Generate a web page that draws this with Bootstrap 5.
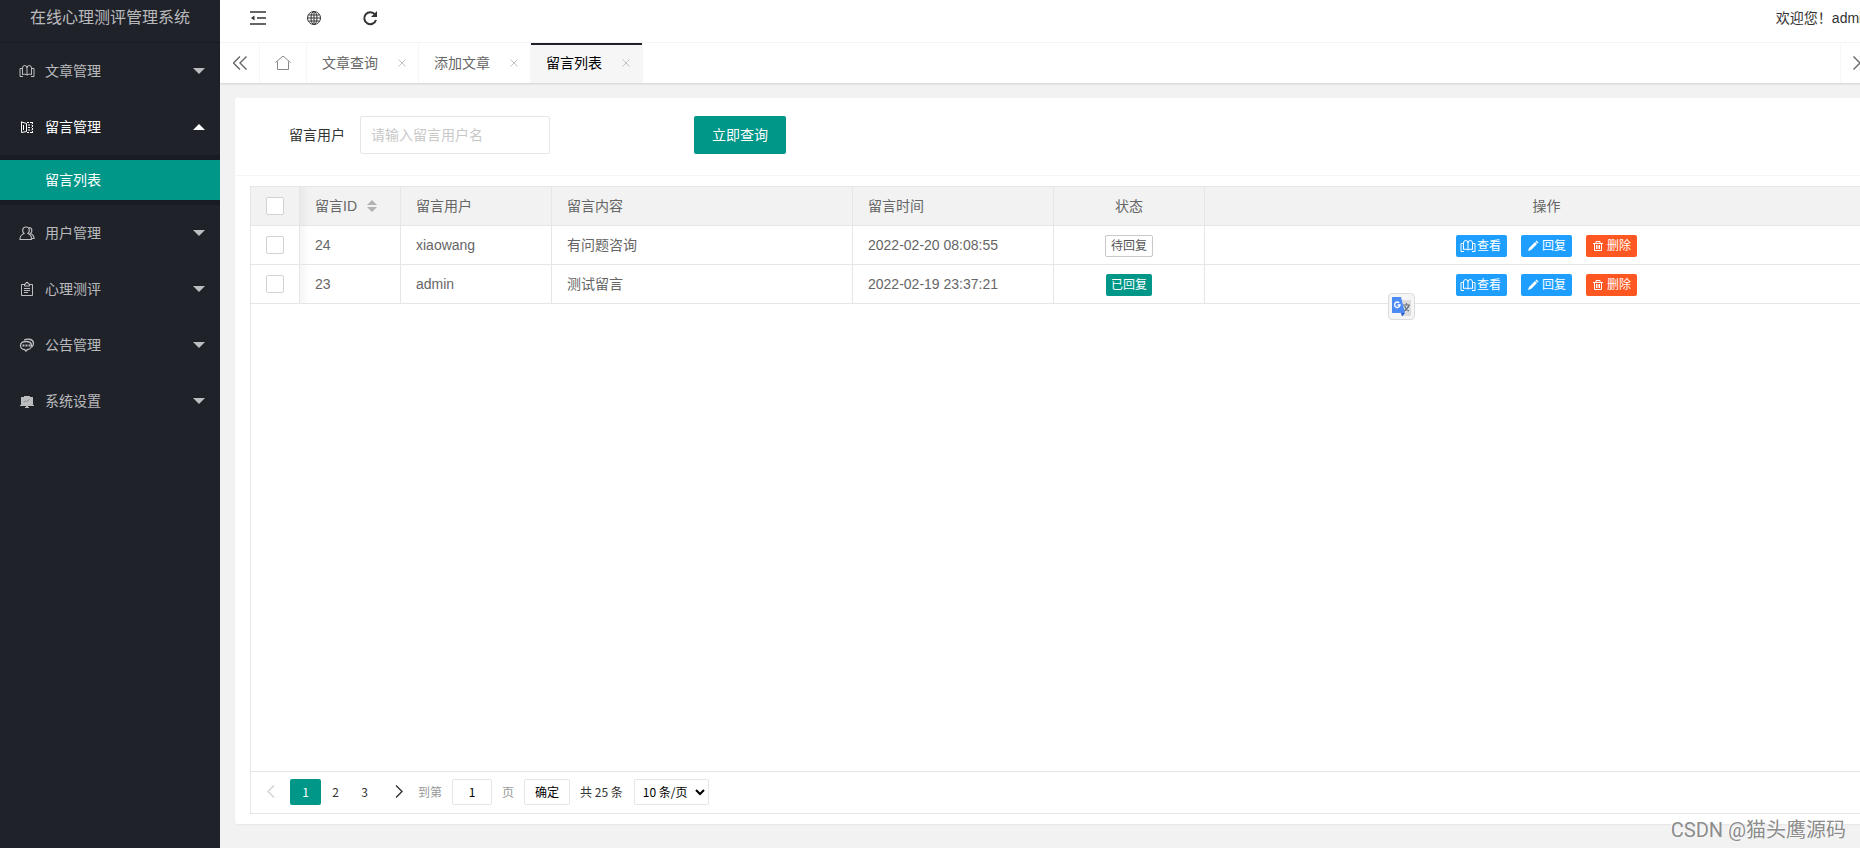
<!DOCTYPE html>
<html lang="zh-CN">
<head>
<meta charset="utf-8">
<meta name="viewport" content="width=device-width, initial-scale=1">
<title>在线心理测评管理系统</title>
<link href="https://cdn.jsdelivr.net/npm/bootstrap@5.3.0/dist/css/bootstrap.min.css" rel="stylesheet">
<script src="https://cdn.jsdelivr.net/npm/bootstrap@5.3.0/dist/js/bootstrap.bundle.min.js" defer></script>
<style>
:root{--teal:#009688;--line:#e6e6e6;--soft:#f6f6f6;--cjk:"Noto Sans CJK SC"}
body{font-family:"Liberation Sans",var(--cjk),sans-serif;font-size:14px;line-height:24px;color:#333;background:#f2f2f2}
svg{display:block;fill:none;stroke:currentColor}
a{text-decoration:none;color:inherit}
.shell{min-height:100vh;overflow:hidden}
.side{width:220px;background:#20222a;color:rgba(255,255,255,.7)}
.brand{height:43px;padding-bottom:6px;font-size:16px;border-bottom:1px solid #1b1d24}
.side-item{height:56px;padding:0 15px 0 19px}
.side-item svg{width:16px;height:16px}
.side-item .label{margin-left:10px}
.caret{margin-left:auto;border:6px solid transparent;border-top-color:currentColor;border-bottom:0}
.caret.up{border-top:0;border-bottom:6px solid currentColor}
.open{color:#fff}
.sub{background:#191b22;padding:5px 0}
.sub a{height:40px;padding-left:45px;background:var(--teal);color:#fff}
/* the workspace runs wider than the window */
.main{margin-right:-60px;min-width:0}
.topbar{height:43px;padding:0 50px 6px 10px;background:#fff;border-bottom:1px solid var(--soft)}
.topbar a.tool{width:56px}
.topbar svg{width:16px;height:16px;margin:auto}
.tabs{height:40px;background:#fff;box-shadow:0 1px 2px rgba(0,0,0,.14);position:relative}
.tabs>a{border-right:1px solid var(--soft);color:#666}
.ctl{width:40px}
.home{width:47px}
.home svg{color:#888}
.tab{width:112px;padding:0 12px 0 15px}
.tab svg{width:8px;height:8px;color:#c2c2c2}
.tabs>a.current{background:var(--soft);color:#000;box-shadow:inset 0 2px #20222a}
.tabs>a.edge{border-left:1px solid var(--soft)}
.panel{margin:15px 15px 24px;background:#fff;border-radius:2px;box-shadow:0 1px 2px rgba(0,0,0,.05)}
.search{height:78px;padding:18px 0 21px 54px;border-bottom:1px solid var(--soft)}
.search input{width:190px;height:38px;margin-left:15px;border:1px solid var(--line);border-radius:2px;padding:0 10px;outline:0}
.search input::placeholder{color:#c8c8c8;opacity:1}
.search button{height:38px;width:92px;margin-left:144px;background:var(--teal);color:#fff;border-radius:2px;font-size:14px;padding:0}
.search button:hover{background:#33ab9f;color:#fff}
.grid-box{margin:10px 15px;border:1px solid var(--line)}
.data{table-layout:fixed;border-collapse:separate;border-spacing:0;width:100%;color:#666;margin:0}
.data th,.data td{height:39px;padding:0 15px;border:solid var(--line);border-width:0 1px 1px 0;font-weight:400;vertical-align:middle}
.data th{background:#f2f2f2}
.data tr>:nth-child(2){background-image:linear-gradient(to right,rgba(0,0,0,.04),transparent 9px)}
.data input{appearance:none;display:block;width:18px;height:18px;border:1px solid #d2d2d2;border-radius:2px;background:#fff;margin:0}
.sort{width:10px;height:12px;fill:#b2b2b2;stroke:none;margin-left:10px}
.acts{gap:14px;padding-top:2px}
.mini{height:22px;padding:0 5px;font-size:12px;line-height:20px;border:0;border-radius:2px;color:#fff;background:var(--teal)}
.mini.wait{background:#fff;color:#555;border:1px solid #c9c9c9}
.act{width:51px;padding:0 4px;background:#1e9fff}
.act svg{width:16px;height:16px;margin-right:1px}
.act.del{background:#ff5722}
.pager{height:42px;padding:0 15px 2px 5px;border-top:1px solid var(--line);font:12px/24px var(--cjk),sans-serif;color:#333}
.pager a{width:29px;height:26px}
.pager a.now{width:31px;background:var(--teal);color:#fff;border-radius:2px}
.pager svg{width:8px;height:13px}
.pager .prev{margin-right:5px;color:#d2d2d2}
.pager .next,.pager label{margin-left:5px}
.box{height:26px;border:1px solid var(--line);border-radius:2px;background:#fff;color:#000;padding:0;text-align:center}
.pg{width:40px;margin:0 10px}
.ok{width:46px;margin:0 10px}
.pager select{width:75px;text-align:left;padding:0 4px;margin-left:11px}
.dim{color:#999}
.translate{left:1137px;top:106px;width:27px;height:27px;border:1px solid #dcdcdc;border-radius:4px;background:#f5f5f5;padding:0}
.translate svg{stroke:none}
.stamp{right:14px;bottom:4px;font-family:Roboto,var(--cjk),sans-serif;font-size:20px;line-height:28px;color:#8c8c8c;text-shadow:-1px -1px #fff}
</style>
</head>
<body>
<svg class="d-none" aria-hidden="true">
  <symbol id="book" viewBox="0 0 16 16"><path d="M3.500 11.500V5Q3.500 2.500 5.700 2.500Q8 2.500 8 5V12M8 5Q8 2.500 10.300 2.500Q12.500 2.500 12.500 5V11.500M3.500 11.500Q6 10.500 8 12Q10 10.500 12.500 11.500M3 5.500H1V13.500H4M13 5.500H15V13.500H12"/></symbol>
  <symbol id="close" viewBox="0 0 8 8"><path d="M.5.5l7 7M7.500.5l-7 7"/></symbol>
  <symbol id="pen" viewBox="0 0 16 16"><path fill="currentColor" stroke="none" d="M3 13l1-3 6-6 2 2-6 6zM10.500 3.500l1-1 2 2-1 1z"/></symbol>
  <symbol id="bin" viewBox="0 0 16 16"><path d="M3 5.500h10M4.500 5.500v7h7v-7M6 5V3.500h4V5M6.500 7v4M8 7v4M9.500 7v4"/></symbol>
</svg>
<div class="shell d-flex position-relative">
  <nav class="side flex-shrink-0">
    <div class="brand d-flex align-items-center justify-content-center">在线心理测评管理系统</div>
    <a href="#" class="side-item d-flex align-items-center"><svg><use href="#book"/></svg><span class="label">文章管理</span><span class="caret"></span></a>
    <a href="#" class="side-item d-flex align-items-center open"><svg viewBox="0 0 16 16"><path d="M2.500 2.500v11M2.500 3l5 1.500v8L2.500 13.500M4.500 6v5"/><path stroke-dasharray="2 1" d="M8 3.500h6M9 6h3.500M9 8.500h3.500M9 11h3.500M8 13.500h6M13.500 3v11"/></svg><span class="label">留言管理</span><span class="caret up"></span></a>
    <div class="sub"><a href="#" class="d-flex align-items-center">留言列表</a></div>
    <a href="#" class="side-item d-flex align-items-center"><svg viewBox="0 0 16 16"><path stroke-width="1.200" d="M7 2c-4 0-4 4.500-2 6.500C2 10 1 11 1 14.500h11.500C12.500 11 12 10 9 8.500 11 6.500 11 2 7 2M10 2.500c3.500 0 3.500 4.500 1.500 6 2.500 1 3.500 2.500 3.500 5h-2"/></svg><span class="label">用户管理</span><span class="caret"></span></a>
    <a href="#" class="side-item d-flex align-items-center"><svg viewBox="0 0 16 16"><path d="M5 3.500H2.500v11h11v-11H11M5.500 5V3H7V1.500h2V3h1.500v2zM5 7.500h6M5 9.500h6M5 11.500h4"/></svg><span class="label">心理测评</span><span class="caret"></span></a>
    <a href="#" class="side-item d-flex align-items-center"><svg viewBox="0 0 16 16"><path stroke-width="1.300" d="M7 4.500c3.500 0 5.500 1.700 5.500 4S10.500 12.500 8.500 12.500L7 14 5.500 12.500C3 12.500 1.500 10.500 1.500 8.500c0-2.300 2-4 5.500-4M5 3c3-1.500 9-1.500 9.500 3 0 2-.5 3-1.500 4"/><path stroke-width="2" stroke-dasharray="2 1" d="M3.500 8.500h8"/></svg><span class="label">公告管理</span><span class="caret"></span></a>
    <a href="#" class="side-item d-flex align-items-center"><svg viewBox="0 0 16 16"><path fill="currentColor" stroke="none" d="M2 4h3V3h6v1h3v8h1v1H9v1h1v1H6v-1h1v-1H1v-1h1z"/><path stroke="#8a8c92" d="M4.500 9l2-1 1 .5 3-2"/></svg><span class="label">系统设置</span><span class="caret"></span></a>
  </nav>
  <main class="main flex-grow-1 d-flex flex-column">
    <header class="topbar d-flex align-items-center">
      <a href="#" class="tool" title="侧边伸缩"><svg viewBox="0 0 16 16" stroke-width="1.500"><path d="M0 2h16M7 8h9M0 14h16"/><path fill="currentColor" stroke="none" d="M1 8l3.500-2.500v5z"/></svg></a>
      <a href="#" class="tool" title="前台"><svg viewBox="0 0 16 16"><circle cx="8" cy="8" r="6.500"/><ellipse cx="8" cy="8" rx="3" ry="6.500"/><path d="M8 1.500v13M1.500 8h13M2.500 5h11M2.500 11h11"/></svg></a>
      <a href="#" class="tool" title="刷新"><svg viewBox="0 0 16 16" stroke-width="2"><path d="M13 4.500A6 6 0 1 0 14 10"/><path fill="currentColor" stroke="none" d="M15 1v6H9z"/></svg></a>
      <a href="#" class="ms-auto">欢迎您！admin</a>
    </header>
    <div class="tabs d-flex flex-shrink-0">
      <a href="#" class="ctl d-flex align-items-center justify-content-center" title="向左"><svg width="14" height="14" viewBox="0 0 14 14" stroke-width="1.400"><path d="M7 .5L.5 7 7 13.500M13.500.5L7 7l6.500 6.500"/></svg></a>
      <a href="#" class="home d-flex align-items-center justify-content-center" title="主页"><svg width="16" height="16" viewBox="0 0 16 16"><path d="M.5 7.500L8 1l7.500 6.500M2.500 6.500v8h11v-8"/></svg></a>
      <a href="#" class="tab d-flex align-items-center justify-content-between">文章查询<svg><use href="#close"/></svg></a>
      <a href="#" class="tab d-flex align-items-center justify-content-between">添加文章<svg><use href="#close"/></svg></a>
      <a href="#" class="tab current d-flex align-items-center justify-content-between">留言列表<svg><use href="#close"/></svg></a>
      <a href="#" class="ctl edge ms-auto d-flex align-items-center justify-content-center" title="向右"><svg width="14" height="14" viewBox="0 0 14 14" stroke-width="1.400"><path d="M.5.5L7 7 .5 13.500M7 .5L13.500 7 7 13.500"/></svg></a>
      <a href="#" class="ctl d-flex align-items-center justify-content-center" title="更多"><svg width="14" height="14" viewBox="0 0 14 14"><path d="M1 4l6 6 6-6"/></svg></a>
    </div>
    <section class="panel flex-grow-1 d-flex flex-column">
      <form class="search d-flex align-items-center">
        <label for="who">留言用户</label>
        <input id="who" type="text" placeholder="请输入留言用户名">
        <button type="button" class="btn">立即查询</button>
      </form>
      <div class="grid-box flex-grow-1 d-flex flex-column position-relative">
        <table class="data">
          <colgroup><col style="width:49px"><col style="width:101px"><col style="width:151px"><col style="width:301px"><col style="width:201px"><col style="width:151px"><col></colgroup>
          <thead><tr>
            <th><input type="checkbox" aria-label="全选"></th>
            <th><span class="d-flex align-items-center">留言ID<svg class="sort" viewBox="0 0 10 12"><path d="M5 0l5 5H0zM5 12l5-5H0z"/></svg></span></th>
            <th>留言用户</th><th>留言内容</th><th>留言时间</th><th class="text-center">状态</th><th class="text-center">操作</th>
          </tr></thead>
          <tbody>
          <tr>
            <td><input type="checkbox" aria-label="选择 24"></td><td>24</td><td>xiaowang</td><td>有问题咨询</td><td>2022-02-20 08:08:55</td>
            <td><div class="acts d-flex justify-content-center"><button type="button" class="mini wait">待回复</button></div></td>
            <td><div class="acts d-flex justify-content-center"><a href="#" class="mini act d-flex align-items-center"><svg><use href="#book"/></svg>查看</a><a href="#" class="mini act d-flex align-items-center"><svg><use href="#pen"/></svg>回复</a><a href="#" class="mini act del d-flex align-items-center"><svg><use href="#bin"/></svg>删除</a></div></td>
          </tr>
          <tr>
            <td><input type="checkbox" aria-label="选择 23"></td><td>23</td><td>admin</td><td>测试留言</td><td>2022-02-19 23:37:21</td>
            <td><div class="acts d-flex justify-content-center"><button type="button" class="mini">已回复</button></div></td>
            <td><div class="acts d-flex justify-content-center"><a href="#" class="mini act d-flex align-items-center"><svg><use href="#book"/></svg>查看</a><a href="#" class="mini act d-flex align-items-center"><svg><use href="#pen"/></svg>回复</a><a href="#" class="mini act del d-flex align-items-center"><svg><use href="#bin"/></svg>删除</a></div></td>
          </tr>
          </tbody>
        </table>
        <button type="button" class="translate position-absolute" title="翻译"><svg width="25" height="25" viewBox="0 0 25 25"><path fill="#dcdcdc" d="M11 6h11v16H14z"/><path stroke="#607080" stroke-width="1.200" d="M14 11h7M17.500 9v2M20 11q-1 4-5 6M15.500 12q2 4 4.500 5"/><path fill="#4c8bf5" d="M3 3h9l4 16H3z"/><path fill="#2a56c6" d="M12 19h4l-3 3.500z"/><path stroke="#fff" stroke-width="1.400" d="M10.200 8.800A2.700 2.700 0 1 0 11 11H8.500"/></svg></button>
        <div class="pager d-flex align-items-center mt-auto">
          <a href="#" class="prev d-flex align-items-center justify-content-center" aria-label="上一页"><svg viewBox="0 0 8 13" stroke-width="1.400"><path d="M7 .5l-6 6 6 6"/></svg></a>
          <a href="#" class="now d-flex align-items-center justify-content-center">1</a>
          <a href="#" class="d-flex align-items-center justify-content-center">2</a>
          <a href="#" class="d-flex align-items-center justify-content-center">3</a>
          <a href="#" class="next d-flex align-items-center justify-content-center" aria-label="下一页"><svg viewBox="0 0 8 13" stroke-width="1.400"><path d="M1 .5l6 6-6 6"/></svg></a>
          <label for="pg" class="dim">到第</label>
          <input id="pg" class="box pg" type="text" value="1">
          <span class="dim">页</span>
          <button type="button" class="box ok">确定</button>
          <span>共 25 条</span>
          <select class="box" aria-label="每页条数"><option>10 条/页</option><option>20 条/页</option></select>
        </div>
      </div>
    </section>
  </main>
  <div class="stamp position-absolute">CSDN @猫头鹰源码</div>
</div>
</body>
</html>
